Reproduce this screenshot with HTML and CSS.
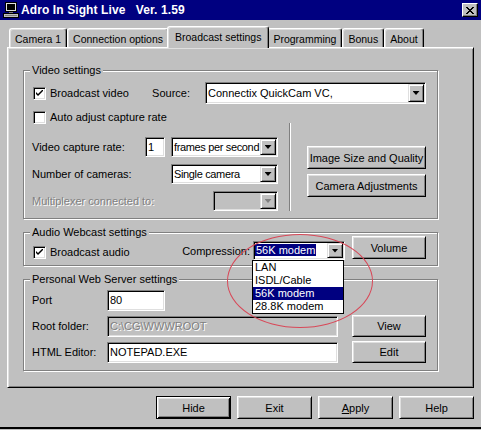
FILE: index.html
```html
<!DOCTYPE html>
<html lang="en">
<head>
    <meta charset="UTF-8">
    <title>Adro In Sight Live</title>
    <link rel="stylesheet" href="styles.css">
</head>
<body>
<div class="window">
    <div class="titlebar">
        <svg class="app-icon" width="16" height="16" viewBox="0 0 16 16">
            <rect x="2.5" y="0.5" width="11" height="9" fill="#dfdfdf" stroke="#000"/>
            <rect x="4" y="2" width="8" height="6" fill="#000"/>
            <rect x="6" y="10" width="4" height="2" fill="#808080"/>
            <rect x="0.5" y="11.5" width="15" height="4" fill="#c0c0c0" stroke="#000"/>
            <line x1="2" y1="13.5" x2="14" y2="13.5" stroke="#808080"/>
        </svg>
        <span class="title">Adro In Sight Live   Ver. 1.59</span>
        <button class="close-btn">
            <svg width="8" height="7" viewBox="0 0 8 7">
                <path d="M0 0 L7 7 M1 0 L8 7 M7 0 L0 7 M8 0 L1 7" stroke="#000" stroke-width="1"/>
            </svg>
        </button>
    </div>

    <div class="client">
        <div class="tabs">
            <div class="tab">Camera 1</div>
            <div class="tab">Connection options</div>
            <div class="tab active">Broadcast settings</div>
            <div class="tab">Programming</div>
            <div class="tab">Bonus</div>
            <div class="tab">About</div>
        </div>

        <div class="page">
            <fieldset class="group video">
                <legend>Video settings</legend>
                <div class="source-row">
                    <label class="check">
                        <span class="box"><svg width="7" height="7" viewBox="0 0 7 7"><path d="M0 2 L0 4 L2 6 L7 1 L7 -1 L2 4 Z" fill="#000"/></svg></span>
                        Broadcast video
                    </label>
                    <span class="source-label">Source:</span>
                    <div class="combo source-combo">
                        <span class="combo-text">Connectix QuickCam VC,</span>
                        <span class="drop"></span>
                    </div>
                </div>
                <label class="check auto-row">
                    <span class="box"></span>
                    Auto adjust capture rate
                </label>

                <div class="capture">
                    <div class="capture-fields">
                        <div class="field-row">
                            <span class="field-label">Video capture rate:</span>
                            <input class="field rate" value="1">
                            <div class="combo unit-combo">
                                <span class="combo-text">frames per second</span>
                                <span class="drop"></span>
                            </div>
                        </div>
                        <div class="field-row">
                            <span class="field-label">Number of cameras:</span>
                            <div class="combo unit-combo">
                                <span class="combo-text">Single camera</span>
                                <span class="drop"></span>
                            </div>
                        </div>
                        <div class="field-row">
                            <span class="field-label disabled">Multiplexer connected to:</span>
                            <div class="combo mux-combo disabled">
                                <span class="combo-text"></span>
                                <span class="drop"></span>
                            </div>
                        </div>
                    </div>
                    <div class="vsep"></div>
                    <div class="capture-buttons">
                        <button class="btn wide">Image Size and Quality</button>
                        <button class="btn wide">Camera Adjustments</button>
                    </div>
                </div>
            </fieldset>

            <fieldset class="group audio">
                <legend>Audio Webcast settings</legend>
                <div class="audio-row">
                    <label class="check">
                        <span class="box"><svg width="7" height="7" viewBox="0 0 7 7"><path d="M0 2 L0 4 L2 6 L7 1 L7 -1 L2 4 Z" fill="#000"/></svg></span>
                        Broadcast audio
                    </label>
                    <span class="compression-label">Compression:</span>
                    <div class="combo compression-combo">
                        <span class="combo-text"><span class="selected">56K modem</span></span>
                        <span class="drop"></span>
                        <ul class="droplist">
                            <li>LAN</li>
                            <li>ISDL/Cable</li>
                            <li class="current">56K modem</li>
                            <li>28.8K modem</li>
                        </ul>
                    </div>
                    <button class="btn volume">Volume</button>
                </div>
            </fieldset>

            <fieldset class="group server">
                <legend>Personal Web Server settings</legend>
                <div class="server-row">
                    <span class="server-label">Port</span>
                    <input class="field port" value="80">
                </div>
                <div class="server-row">
                    <span class="server-label">Root folder:</span>
                    <input class="field path locked" value="C:\CG\WWWROOT" readonly>
                    <button class="btn side">View</button>
                </div>
                <div class="server-row">
                    <span class="server-label">HTML Editor:</span>
                    <input class="field path" value="NOTEPAD.EXE">
                    <button class="btn side">Edit</button>
                </div>
            </fieldset>

            <!-- red callout round the compression list -->
            <div class="callout"></div>
        </div>

        <div class="actions">
            <button class="btn default">Hide</button>
            <button class="btn">Exit</button>
            <button class="btn"><u>A</u>pply</button>
            <button class="btn">Help</button>
        </div>
    </div>
</div>
</body>
</html>
```

FILE: styles.css
```css
* {
    box-sizing: border-box;
    margin: 0;
    padding: 0;
}

body {
    width: 481px;
    height: 430px;
    overflow: hidden;
    background: #c0c0c0;
    color: #000;
    font-family: "Liberation Sans", Arial, sans-serif;
    font-size: 11px;
}

.window {
    height: 429px;
    border-bottom: 2px solid #000;
}

/* title bar */

.titlebar {
    display: flex;
    align-items: center;
    height: 20px;
    padding: 0 3px;
    background: #000080;
    color: #fff;
}

.app-icon {
    margin-right: 2px;
}

.title {
    font-size: 12px;
    font-weight: bold;
    white-space: pre;
    letter-spacing: 0.1px;
}

.close-btn {
    display: flex;
    align-items: center;
    justify-content: center;
    margin-left: auto;
    width: 16px;
    height: 14px;
    background: #c0c0c0;
    border: 1px solid;
    border-color: #fff #000 #000 #fff;
    box-shadow: inset -1px -1px #808080;
}

/* tabs */

.client {
    padding: 6px 7px 0;
}

.tabs {
    display: flex;
    align-items: flex-start;
    height: 21px;
    padding-left: 2px;
}

.tab {
    height: 19px;
    margin-top: 2px;
    padding: 4px 5px 0;
    font-size: 10.5px;
    line-height: 13px;
    white-space: nowrap;
    background: #c0c0c0;
    border: 1px solid;
    border-color: #fff #000 #000 #fff;
    border-bottom: 0;
    border-radius: 3px 3px 0 0;
    box-shadow: inset -1px 0 #808080, inset 1px 1px #dfdfdf;
}

.tab.active {
    position: relative;
    z-index: 1;
    height: 22px;
    margin: 0 -2px;
    padding: 4px 7px 0;
}

.page {
    position: relative;
    height: 341px;
    padding: 16px 0 0 15px;
    border: 1px solid;
    border-color: #fff #000 #000 #fff;
    box-shadow: inset 1px 1px #dfdfdf, inset -1px -1px #808080;
}

/* group boxes */

.group {
    width: 415px;
    min-width: 0;
    padding: 0 11px 0 8px;
    border: 1px solid #808080;
    box-shadow: inset 1px 1px #fff, 1px 1px #fff;
}

.group + .group {
    margin-top: 7px;
}

.group legend {
    margin-left: -2px;
    padding: 0 2px;
    line-height: 13px;
    background: #c0c0c0;
}

.video {
    height: 155px;
}

.audio {
    height: 40px;
}

.server {
    height: 98px;
}

/* checkboxes */

.check {
    display: flex;
    align-items: center;
    gap: 4px;
    line-height: 13px;
}

.box {
    display: flex;
    align-items: center;
    justify-content: center;
    width: 13px;
    height: 13px;
    margin-left: 1px;
    background: #fff;
    border: 1px solid;
    border-color: #808080 #fff #fff #808080;
    box-shadow: inset 1px 1px #000, inset -1px -1px #dfdfdf;
}

/* combo boxes and text fields */

.combo {
    position: relative;
    display: flex;
    align-items: center;
    height: 20px;
    padding: 1px;
    background: #fff;
    border: 1px solid;
    border-color: #808080 #fff #fff #808080;
    box-shadow: inset 1px 1px #000, inset -1px -1px #dfdfdf;
}

.combo-text {
    flex: 1;
    padding-left: 2px;
    white-space: nowrap;
    overflow: hidden;
}

.drop {
    display: flex;
    align-items: center;
    justify-content: center;
    align-self: stretch;
    width: 16px;
    background: #c0c0c0;
    border: 1px solid;
    border-color: #dfdfdf #000 #000 #dfdfdf;
    box-shadow: inset 1px 1px #fff, inset -1px -1px #808080;
}

.drop::after {
    content: "";
    width: 7px;
    height: 4px;
    background: #000;
    clip-path: polygon(0 0, 100% 0, 50% 100%);
}

.combo.disabled {
    background: #c0c0c0;
}

.combo.disabled .drop::after {
    background: #808080;
}

.field {
    height: 20px;
    padding: 0 2px;
    font: inherit;
    color: #000;
    background: #fff;
    border: 1px solid;
    border-color: #808080 #fff #fff #808080;
    box-shadow: inset 1px 1px #000, inset -1px -1px #dfdfdf;
    outline: none;
}

.field.locked {
    background: #c0c0c0;
    color: #808080;
    text-shadow: 1px 1px #fff;
}

.disabled {
    color: #808080;
    text-shadow: 1px 1px #fff;
}

/* buttons */

.btn {
    width: 75px;
    height: 23px;
    font: inherit;
    color: #000;
    background: #c0c0c0;
    border: 1px solid;
    border-color: #fff #000 #000 #fff;
    box-shadow: inset 1px 1px #dfdfdf, inset -1px -1px #808080;
}

.btn.default {
    border-color: #000;
    box-shadow: inset 1px 1px #fff, inset -1px -1px #000, inset 2px 2px #dfdfdf, inset -2px -2px #808080;
}

/* video settings */

.source-row {
    display: flex;
    align-items: center;
    height: 22px;
    margin-top: 5px;
}

.source-label {
    margin-left: auto;
    margin-right: 15px;
}

.source-combo {
    width: 221px;
    height: 22px;
}

.source-combo .combo-text {
    padding-left: 1px;
}

.auto-row {
    margin-top: 7px;
}

.capture {
    display: flex;
    height: 93px;
}

.capture-fields {
    display: flex;
    flex-direction: column;
    gap: 7px;
    width: 246px;
    padding-top: 13px;
}

.field-row {
    display: flex;
    align-items: center;
    height: 20px;
}

.field-label {
    flex: 1;
}

.rate {
    width: 20px;
    margin-right: 6px;
}

.unit-combo {
    width: 107px;
}

.unit-combo .combo-text {
    padding-left: 1px;
    letter-spacing: -0.35px;
}

.mux-combo {
    width: 65px;
}

.vsep {
    width: 2px;
    height: 88px;
    margin: -1px 0 0 11px;
    border-left: 1px solid #808080;
    border-right: 1px solid #fff;
}

.capture-buttons {
    display: flex;
    flex-direction: column;
    gap: 5px;
    width: 119px;
    margin-left: 16px;
    padding-top: 22px;
}

.btn.wide {
    width: 119px;
}

/* audio */

.audio-row {
    display: flex;
    align-items: flex-end;
    height: 24px;
    margin-top: -3px;
}

.audio-row .check {
    margin-bottom: 1px;
}

.compression-label {
    margin: 0 3px 2px auto;
    line-height: 13px;
}

.compression-combo {
    width: 92px;
    height: 19px;
}

.selected {
    padding: 0 1px;
    line-height: 13px;
    background: #000080;
    color: #fff;
}

.combo-text:has(.selected) {
    padding-left: 0;
}

.droplist {
    position: absolute;
    top: 18px;
    left: -2px;
    z-index: 3;
    width: 92px;
    list-style: none;
    background: #fff;
    border: 1px solid #000;
}

.droplist li {
    padding-left: 2px;
    line-height: 13px;
}

.droplist .current {
    background: #000080;
    color: #fff;
}

.btn.volume {
    width: 74px;
    margin: 0 0 1px 7px;
}

/* web server */

.server-row {
    display: flex;
    align-items: center;
    height: 22px;
    margin-top: 4px;
}

.server legend + .server-row {
    margin-top: 3px;
}

.server-label {
    width: 75px;
}

.port {
    width: 58px;
    height: 21px;
}

.path {
    width: 231px;
    height: 21px;
}

.btn.side {
    width: 74px;
    height: 22px;
    margin-left: auto;
}

.callout {
    position: absolute;
    left: 219px;
    top: 186px;
    z-index: 4;
    width: 146px;
    height: 94px;
    border: 1px solid #d84858;
    border-radius: 50%;
    pointer-events: none;
}

/* bottom buttons */

.actions {
    display: flex;
    justify-content: flex-end;
    gap: 6px;
    margin-top: 8px;
}
```
